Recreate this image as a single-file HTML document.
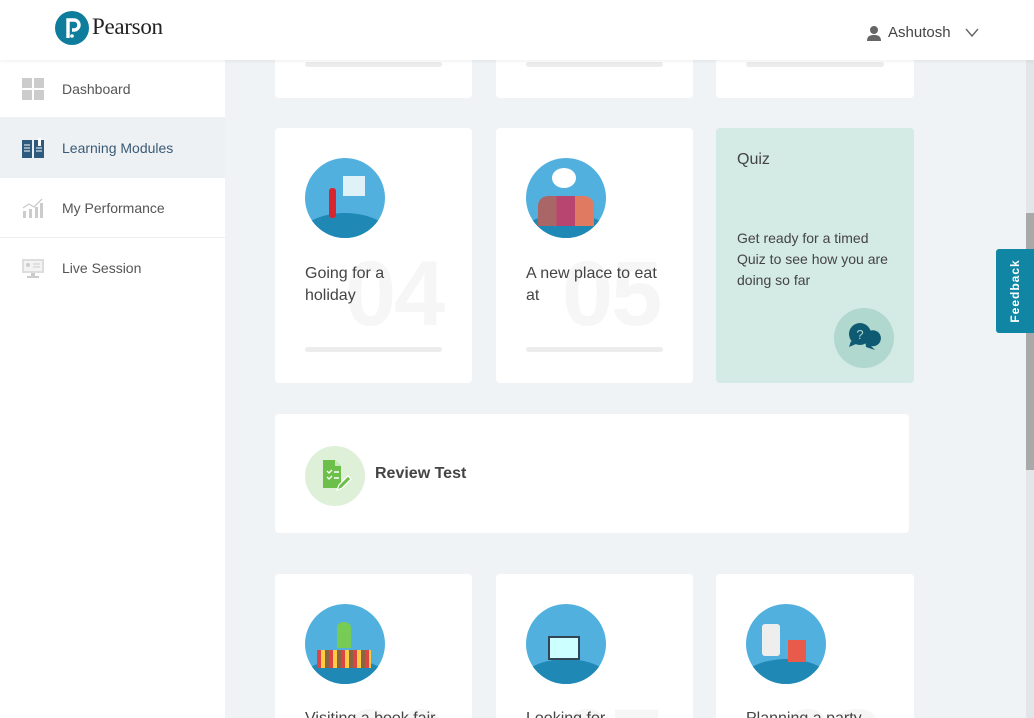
<!DOCTYPE html>
<html style="width:1034px;height:718px;overflow:hidden"><head><meta charset="utf-8"><style>
*{box-sizing:border-box;margin:0;padding:0}
body{width:1034px;height:718px;overflow:hidden;background:#f0f3f5;font-family:"Liberation Sans",sans-serif;color:#444;position:relative}
.hdr{position:absolute;left:0;top:0;width:1034px;height:60px;background:#fff;box-shadow:0 1px 4px rgba(0,0,0,.07);z-index:3}
.side{position:absolute;left:0;top:60px;width:225px;height:658px;background:#fff;z-index:2}
.item{height:60px;display:flex;align-items:center;padding-left:22px;font-size:14px;color:#555}
.item .ic{width:22px;height:22px;margin-right:18px;position:relative}
.card{position:absolute;background:#fff;border-radius:4px;overflow:hidden}
.bar{position:absolute;height:5px;border-radius:3px;background:#ececec}
.circ{position:absolute;width:80px;height:80px;border-radius:50%;background:#52b0de;overflow:hidden}
.circ:after{content:"";position:absolute;left:-10px;right:-10px;top:55px;height:60px;border-radius:50%;background:#1f88b5}
.num{position:absolute;font-size:92px;font-weight:bold;color:#f6f6f6;letter-spacing:-2px;line-height:1}
.ttl{position:absolute;font-size:16px;line-height:22px;color:#444}
</style></head><body>
<div class="hdr">
 <svg style="position:absolute;left:55px;top:11px" width="34" height="34" viewBox="0 0 34 34"><circle cx="17" cy="17" r="17" fill="#0e7c9b"/><path d="M13 27V9h6a5 5 0 0 1 0 10h-2" fill="none" stroke="#fff" stroke-width="3.4"/><circle cx="17" cy="25" r="1.8" fill="#fff"/></svg>
 <div style="position:absolute;left:92px;top:14px;font-family:'Liberation Serif',serif;font-size:23px;color:#222;letter-spacing:-0.3px">Pearson</div>
 <svg style="position:absolute;left:866px;top:25px" width="16" height="16" viewBox="0 0 16 16"><circle cx="8" cy="5" r="4" fill="#666"/><path d="M1 16c0-5 3-6 7-6s7 1 7 6z" fill="#666"/></svg>
 <div style="position:absolute;left:888px;top:24px;font-size:15px;color:#444">Ashutosh</div>
 <svg style="position:absolute;left:965px;top:28px" width="14" height="10"><path d="M1 1l6 7 6-7" fill="none" stroke="#666" stroke-width="1.4"/></svg>
</div>
<div class="side">
 <div class="item" style="height:57px"><div class="ic"><div style="position:absolute;left:0;top:0;width:10px;height:10px;background:#ccc"></div><div style="position:absolute;left:12px;top:0;width:10px;height:10px;background:#ccc"></div><div style="position:absolute;left:0;top:12px;width:10px;height:10px;background:#ccc"></div><div style="position:absolute;left:12px;top:12px;width:10px;height:10px;background:#ccc"></div></div>Dashboard</div>
 <div class="item" style="background:#eef1f4;height:61px;color:#3a5a75"><div class="ic"><svg width="22" height="22"><path d="M0 3h10v18H0zM12 3h10v18H12z" fill="#2e5a7e"/><path d="M2 8h6M2 11h6M2 14h6M14 11h6M14 14h6" stroke="#fff" stroke-width="1"/><rect x="16" y="1" width="3" height="8" fill="#fff"/></svg></div>Learning Modules</div>
 <div class="item" style="border-bottom:1px solid #eee"><div class="ic"><svg width="22" height="22"><path d="M1 21V14h3v7zM7 21V12h3v9zM13 21V10h3v11zM18 21V6h3v15z" fill="#ccc"/><path d="M1 11l6-4 5 3 8-8" fill="none" stroke="#ccc" stroke-width="1.3"/></svg></div>My Performance</div>
 <div class="item"><div class="ic"><svg width="22" height="22"><rect x="0" y="2" width="22" height="14" fill="#ddd"/><rect x="2" y="4" width="18" height="10" fill="#f3f3f3"/><path d="M11 7h7M11 10h7" stroke="#ccc"/><circle cx="6" cy="8" r="2" fill="#ccc"/><rect x="9" y="16" width="4" height="3" fill="#ccc"/><rect x="5" y="19" width="12" height="2" fill="#ccc"/></svg></div>Live Session</div>
</div>

<div class="card" style="left:275px;top:40px;width:197px;height:58px"><div class="bar" style="left:30px;top:22px;width:137px"></div></div>
<div class="card" style="left:496px;top:40px;width:197px;height:58px"><div class="bar" style="left:30px;top:22px;width:137px"></div></div>
<div class="card" style="left:716px;top:40px;width:198px;height:58px"><div class="bar" style="left:30px;top:22px;width:138px"></div></div>

<div class="card" style="left:275px;top:128px;width:197px;height:255px">
 <div class="num" style="left:70px;top:120px">04</div>
 <div class="circ" style="left:30px;top:30px"><div style="position:absolute;left:38px;top:18px;width:22px;height:20px;background:#dff2f8;z-index:1"></div><div style="position:absolute;left:24px;top:30px;width:7px;height:30px;background:#d7262d;z-index:1;border-radius:3px"></div></div>
 <div class="ttl" style="left:30px;top:135px">Going for a<br>holiday</div>
 <div class="bar" style="left:30px;top:219px;width:137px"></div>
</div>
<div class="card" style="left:496px;top:128px;width:197px;height:255px">
 <div class="num" style="left:66px;top:120px">05</div>
 <div class="circ" style="left:30px;top:30px"><div style="position:absolute;left:26px;top:10px;width:24px;height:20px;border-radius:50%;background:#fff;z-index:1"></div><div style="position:absolute;left:12px;top:38px;width:56px;height:30px;z-index:1;background:linear-gradient(90deg,#a66 0 33%,#b84470 33% 66%,#e07a60 66%);border-radius:10px 10px 0 0"></div></div>
 <div class="ttl" style="left:30px;top:135px">A new place to eat<br>at</div>
 <div class="bar" style="left:30px;top:219px;width:137px"></div>
</div>
<div class="card" style="left:716px;top:128px;width:198px;height:255px;background:#d4eae4">
 <div class="ttl" style="left:21px;top:21px">Quiz</div>
 <div style="position:absolute;left:21px;top:100px;font-size:14px;line-height:21px;color:#444">Get ready for a timed<br>Quiz to see how you are<br>doing so far</div>
 <div style="position:absolute;left:118px;top:180px;width:60px;height:60px;border-radius:50%;background:#b1d8ce"></div>
 <svg style="position:absolute;left:131px;top:193px" width="34" height="34" viewBox="0 0 34 34"><path d="M18 16a8 8 0 1 1 6 9l4 4-9-3z" fill="#0e5a72"/><circle cx="13" cy="13" r="11" fill="#0e5a72"/><path d="M4 20l-2 6 7-3z" fill="#0e5a72"/><text x="13" y="18" font-size="13" fill="#b1d8ce" text-anchor="middle" font-family="Liberation Sans">?</text></svg>
</div>

<div class="card" style="left:275px;top:414px;width:634px;height:119px">
 <div style="position:absolute;left:30px;top:32px;width:60px;height:60px;border-radius:50%;background:#dff0d8"></div>
 <svg style="position:absolute;left:44px;top:44px" width="36" height="36" viewBox="0 0 36 36"><path d="M4 2h12l6 6v22H4z" fill="#6cc04a"/><path d="M16 2v6h6" fill="#c8e8b8"/><path d="M8 13l2 2 3-3M8 19l2 2 3-3" fill="none" stroke="#fff" stroke-width="1.3"/><path d="M15 14h5M15 20h5" stroke="#fff" stroke-width="1.5"/><path d="M18 32l2-5 9-9 3 3-9 9z" fill="#6cc04a" stroke="#fff" stroke-width="1.2"/></svg>
 <div style="position:absolute;left:100px;top:51px;font-size:16px;font-weight:bold;color:#444">Review Test</div>
</div>

<div class="card" style="left:275px;top:574px;width:197px;height:144px;border-radius:4px 4px 0 0">
 <div class="num" style="left:70px;top:122px">06</div>
 <div class="circ" style="left:30px;top:30px"><div style="position:absolute;left:12px;top:46px;width:54px;height:18px;z-index:1;background:repeating-linear-gradient(90deg,#d44 0 4px,#fc4 4px 8px,#864 8px 12px)"></div><div style="position:absolute;left:32px;top:18px;width:14px;height:26px;background:#7c5;border-radius:6px 6px 0 0;z-index:1"></div></div>
 <div class="ttl" style="left:30px;top:134px">Visiting a book fair</div>
</div>
<div class="card" style="left:496px;top:574px;width:197px;height:144px;border-radius:4px 4px 0 0">
 <div class="num" style="left:66px;top:122px">07</div>
 <div class="circ" style="left:30px;top:30px"><div style="position:absolute;left:22px;top:32px;width:32px;height:24px;background:#cff;border:2px solid #345;z-index:1"></div></div>
 <div class="ttl" style="left:30px;top:134px">Looking for</div>
</div>
<div class="card" style="left:716px;top:574px;width:198px;height:144px;border-radius:4px 4px 0 0">
 <div class="num" style="left:66px;top:122px">08</div>
 <div class="circ" style="left:30px;top:30px"><div style="position:absolute;left:16px;top:20px;width:18px;height:32px;background:#eee;border-radius:3px;z-index:1"></div><div style="position:absolute;left:42px;top:36px;width:18px;height:22px;background:#e85a4a;z-index:1"></div></div>
 <div class="ttl" style="left:30px;top:134px">Planning a party</div>
</div>

<div style="position:absolute;left:1026px;top:60px;width:8px;height:658px;background:#e3e6e8"></div>
<div style="position:absolute;left:1026px;top:213px;width:8px;height:257px;background:#a9a9a9"></div>
<div style="position:absolute;left:996px;top:249px;width:38px;height:84px;background:#1186a4;border-radius:3px 0 0 3px"></div>
<div style="position:absolute;left:1015px;top:291px;transform:translate(-50%,-50%) rotate(-90deg);color:#fff;font-size:12px;font-weight:bold;letter-spacing:1px;white-space:nowrap">Feedback</div>
</body></html>
